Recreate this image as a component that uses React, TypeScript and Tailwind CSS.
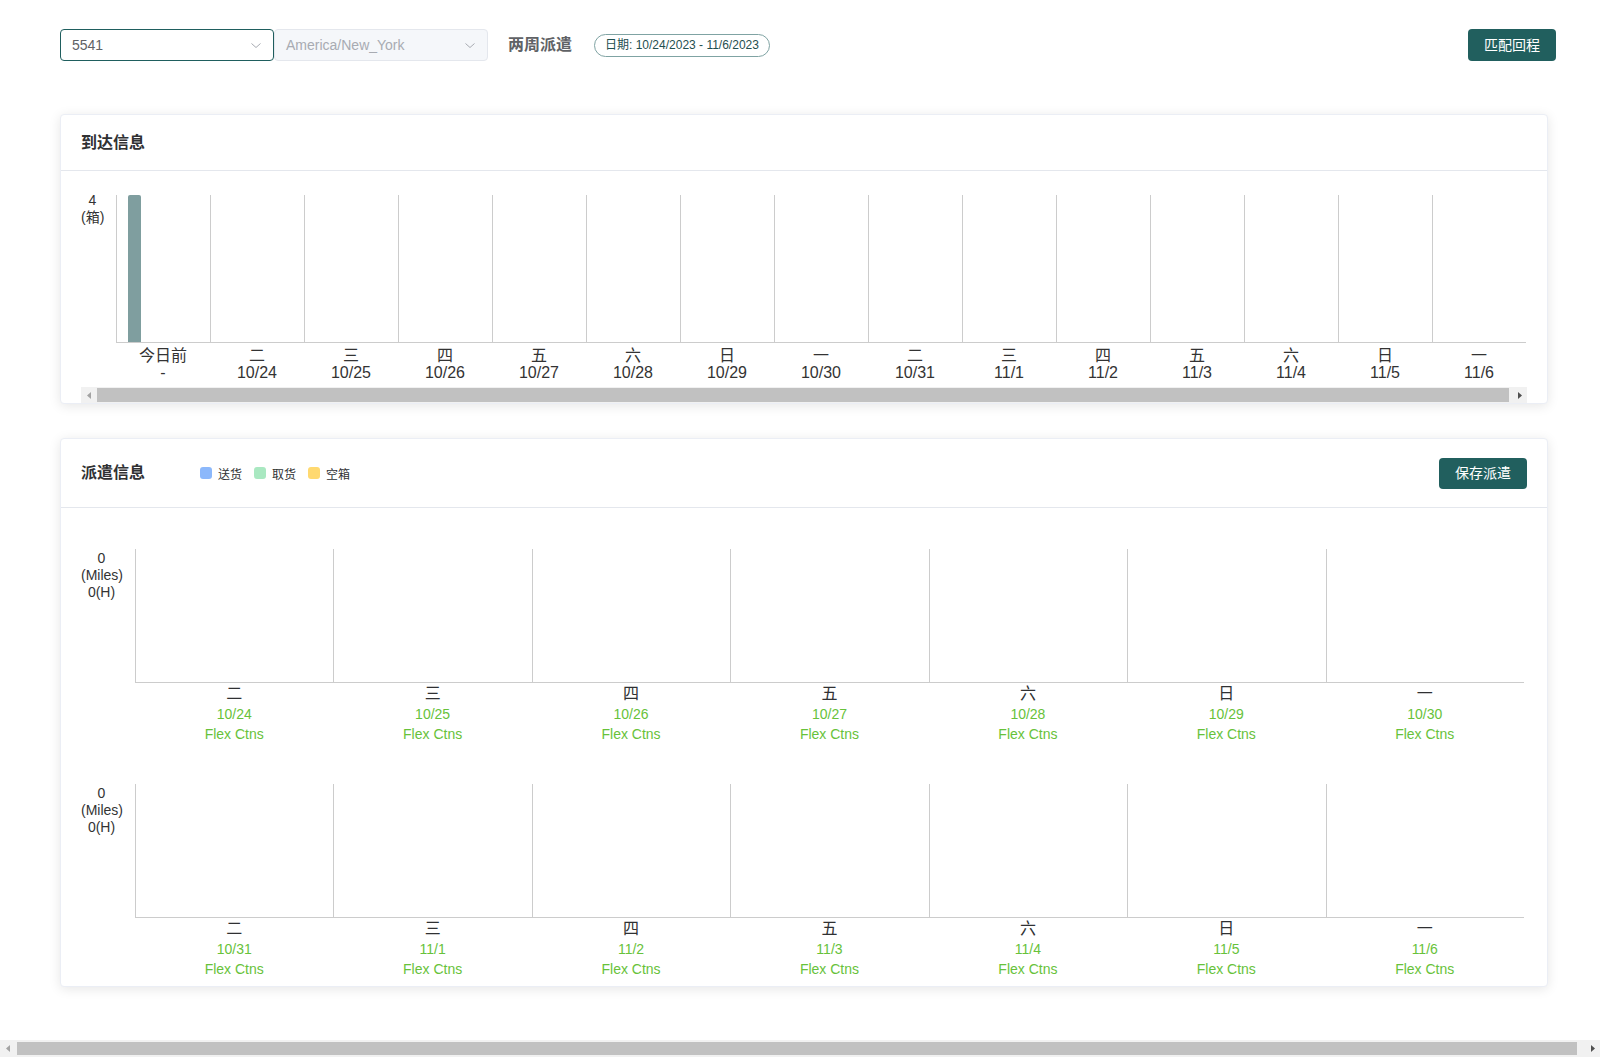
import React from "react";

const arrival = [
  { week: "今日前", date: "-", value: 4 },
  { week: "二", date: "10/24", value: 0 },
  { week: "三", date: "10/25", value: 0 },
  { week: "四", date: "10/26", value: 0 },
  { week: "五", date: "10/27", value: 0 },
  { week: "六", date: "10/28", value: 0 },
  { week: "日", date: "10/29", value: 0 },
  { week: "一", date: "10/30", value: 0 },
  { week: "二", date: "10/31", value: 0 },
  { week: "三", date: "11/1", value: 0 },
  { week: "四", date: "11/2", value: 0 },
  { week: "五", date: "11/3", value: 0 },
  { week: "六", date: "11/4", value: 0 },
  { week: "日", date: "11/5", value: 0 },
  { week: "一", date: "11/6", value: 0 },
];

const dispatchWeeks = [
  [
    { week: "二", date: "10/24" },
    { week: "三", date: "10/25" },
    { week: "四", date: "10/26" },
    { week: "五", date: "10/27" },
    { week: "六", date: "10/28" },
    { week: "日", date: "10/29" },
    { week: "一", date: "10/30" },
  ],
  [
    { week: "二", date: "10/31" },
    { week: "三", date: "11/1" },
    { week: "四", date: "11/2" },
    { week: "五", date: "11/3" },
    { week: "六", date: "11/4" },
    { week: "日", date: "11/5" },
    { week: "一", date: "11/6" },
  ],
];

const Chevron = () => (
  <svg width="12" height="12" viewBox="0 0 12 12" fill="none">
    <path d="M1.5 4.5 L6 8.5 L10.5 4.5" stroke="#a8abb2" strokeWidth="1" />
  </svg>
);

const ArrowLeft = ({ color }: { color: string }) => (
  <svg width="4" height="7" viewBox="0 0 4 7">
    <path d="M4 0 L0 3.5 L4 7 Z" fill={color} />
  </svg>
);

const ArrowRight = ({ color }: { color: string }) => (
  <svg width="4" height="7" viewBox="0 0 4 7">
    <path d="M0 0 L4 3.5 L0 7 Z" fill={color} />
  </svg>
);

// drawn scrollbar (headless page hides native ones)
const Scrollbar: React.FC<{ className: string; thumbClass: string }> = ({ className, thumbClass }) => (
  <div className={`flex items-stretch bg-[#f1f1f1] ${className}`}>
    <div className="w-[15px] flex items-center justify-center">
      <ArrowLeft color="#a3a3a3" />
    </div>
    <div className={`flex-1 py-[1px] ${thumbClass}`}>
      <div className="h-full bg-[#c1c1c1]" />
    </div>
    <div className="w-[15px] flex items-center justify-center">
      <ArrowRight color="#505050" />
    </div>
  </div>
);

const Panel: React.FC<{ header: React.ReactNode; headerClass: string; children: React.ReactNode }> = ({
  header,
  headerClass,
  children,
}) => (
  <div className="bg-white border border-[#ebeef5] rounded-[4px] shadow-[0_2px_12px_0_rgba(0,0,0,0.1)]">
    <div className={`flex items-center px-[20px] border-b border-[#e4e7ed] ${headerClass}`}>{header}</div>
    {children}
  </div>
);

const DispatchRow: React.FC<{ days: { week: string; date: string }[] }> = ({ days }) => (
  <div className="flex">
    <div className="w-[54px] pr-[13px] pt-[1px] text-center text-[14px] leading-[17px] text-[#333]">
      <div>0</div>
      <div>(Miles)</div>
      <div>0(H)</div>
    </div>
    <div className="flex-1">
      <div className="flex h-[134px] border-b border-[#ccc] mr-[3px]">
        {days.map((d, i) => (
          <div key={i} className="flex-1 border-l border-[#ccc]" />
        ))}
      </div>
      <div className="flex mr-[3px] pt-[1px]">
        {days.map((d, i) => (
          <div key={i} className="flex-1 text-center text-[14px] leading-[20px]">
            <div className="text-[16px] text-[#303133]">{d.week}</div>
            <div className="text-[#67c23a]">{d.date}</div>
            <div className="text-[#67c23a]">Flex Ctns</div>
          </div>
        ))}
      </div>
    </div>
  </div>
);

export default function App() {
  return (
    <div className="w-full h-[1057px] overflow-hidden flex flex-col bg-white font-['Liberation_Sans','Noto_Sans_CJK_SC',sans-serif] text-[#303133]">
      <div className="flex-1">
        {/* top bar */}
        <div className="flex items-center pt-[29px] pl-[60px] pr-[44px]">
          <div className="flex items-center justify-between w-[214px] h-[32px] px-[11px] border border-[#1f5e5e] rounded-[4px] text-[14px] text-[#606266]">
            <span>5541</span>
            <Chevron />
          </div>
          <div className="flex items-center justify-between w-[214px] h-[32px] px-[11px] bg-[#f5f7fa] border border-[#e4e7ed] rounded-[4px] text-[14px] text-[#a8abb2]">
            <span>America/New_York</span>
            <Chevron />
          </div>
          <div className="ml-[20px] text-[16px] font-bold text-[#606266]">两周派遣</div>
          <div className="ml-[22px] h-[23px] flex items-center px-[10px] rounded-full border border-[#7fa3a3] text-[12px] text-[#1f4f4f]">
            日期: 10/24/2023 - 11/6/2023
          </div>
          <div className="flex-1" />
          <button className="h-[32px] w-[88px] rounded-[4px] bg-[#215f5e] text-white text-[14px]">匹配回程</button>
        </div>

        <div className="pl-[60px] pr-[52px] pt-[53px] flex flex-col gap-[34px]">
          {/* arrival */}
          <Panel headerClass="h-[56px]" header={<span className="text-[16px] font-bold text-[#303133]">到达信息</span>}>
            <div className="px-[20px] pt-[21px]">
              <div className="overflow-hidden">
                <div className="flex w-max">
                  <div className="w-[35px] pr-[12px] text-center text-[14px] leading-[17px] text-[#333]">
                    <div>4</div>
                    <div>(箱)</div>
                  </div>
                  <div className="pt-[3px]">
                    <div className="flex h-[148px] border-b border-[#ccc]">
                      {arrival.map((c, i) => (
                        <div key={i} className="w-[94px] border-l border-[#ccc] flex items-end">
                          {c.value > 0 && (
                            <div
                              className="ml-[11px] w-[13px] bg-[#7f9e9f] rounded-t-[2px]"
                              style={{ height: `${(c.value / 4) * 100}%` }}
                            />
                          )}
                        </div>
                      ))}
                    </div>
                    <div className="flex pt-[4px] pb-[6px]">
                      {arrival.map((c, i) => (
                        <div key={i} className="w-[94px] text-center text-[16px] leading-[17px] text-[#333]">
                          <div>{c.week}</div>
                          <div>{c.date}</div>
                        </div>
                      ))}
                    </div>
                  </div>
                </div>
              </div>
              <Scrollbar className="h-[16px]" thumbClass="ml-[1px] mr-[3px]" />
            </div>
          </Panel>

          {/* dispatch */}
          <Panel
            headerClass="h-[69px]"
            header={
              <>
                <span className="text-[16px] font-bold text-[#303133]">派遣信息</span>
                <div className="ml-[55px] flex items-center gap-[12px] text-[12px] text-[#303133]">
                  <div className="flex items-center gap-[6px]">
                    <span className="w-[12px] h-[12px] rounded-[3px] bg-[#8cb8fb]" />
                    <span className="pt-[3px]">送货</span>
                  </div>
                  <div className="flex items-center gap-[6px]">
                    <span className="w-[12px] h-[12px] rounded-[3px] bg-[#a9e8c1]" />
                    <span className="pt-[3px]">取货</span>
                  </div>
                  <div className="flex items-center gap-[6px]">
                    <span className="w-[12px] h-[12px] rounded-[3px] bg-[#ffd970]" />
                    <span className="pt-[3px]">空箱</span>
                  </div>
                </div>
                <div className="flex-1" />
                <button className="h-[31px] w-[88px] rounded-[4px] bg-[#215f5e] text-white text-[14px]">保存派遣</button>
              </>
            }
          >
            <div className="px-[20px] pt-[41px] pb-[7px] flex flex-col gap-[40px]">
              {dispatchWeeks.map((w, i) => (
                <DispatchRow key={i} days={w} />
              ))}
            </div>
          </Panel>
        </div>
      </div>

      {/* page scrollbar */}
      <Scrollbar className="h-[17px]" thumbClass="ml-[2px] mr-[8px] py-[2px]" />
    </div>
  );
}
